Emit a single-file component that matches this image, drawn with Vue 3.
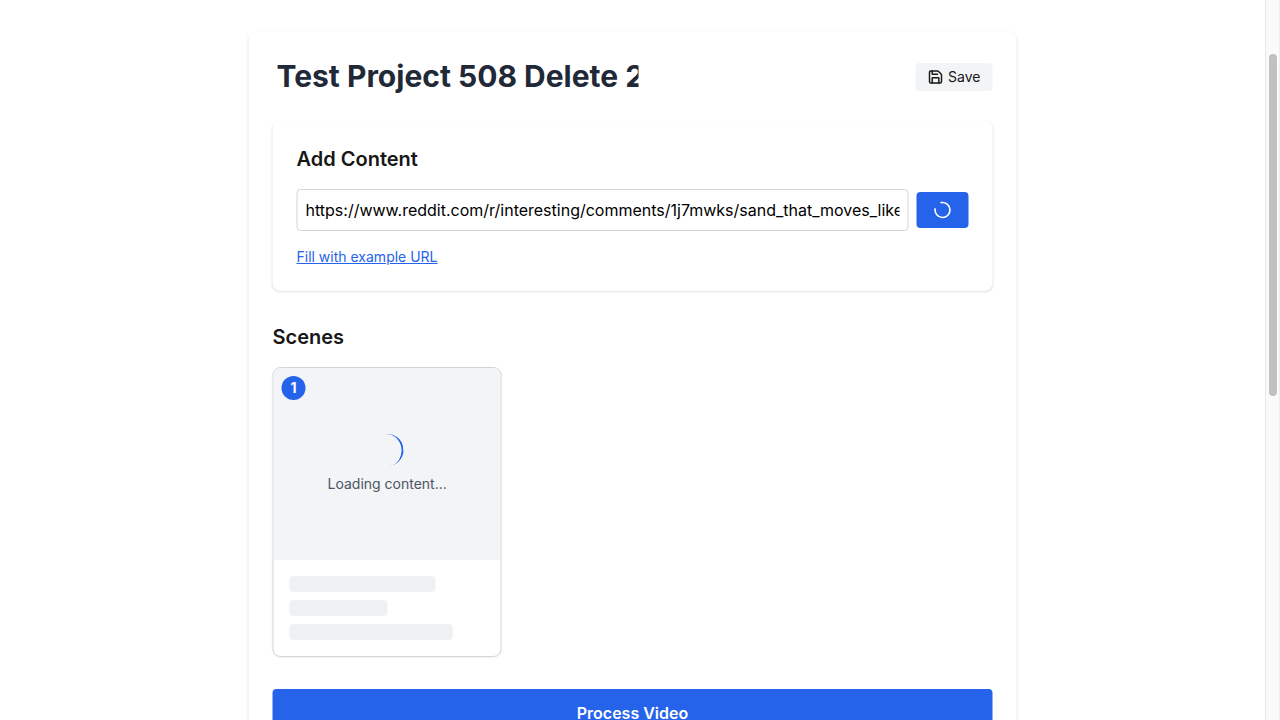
<script setup>
import { ref } from 'vue'

const title = ref('Test Project 508 Delete 2')
const url = ref('https://www.reddit.com/r/interesting/comments/1j7mwks/sand_that_moves_like_water/')
const skeletons = [75, 50, 83.33]
</script>

<template>
  <div class="viewport">
    <main class="page">
      <section class="project">
        <header class="head">
          <input v-model="title" class="title" />
          <button class="save">
            <svg width="16" height="16" viewBox="0 0 24 24" fill="none" stroke="currentColor" stroke-width="2.2" stroke-linecap="round" stroke-linejoin="round">
              <path d="M15.2 3a2 2 0 0 1 1.4.6l3.8 3.8a2 2 0 0 1 .6 1.4V19a2 2 0 0 1-2 2H5a2 2 0 0 1-2-2V5a2 2 0 0 1 2-2z" />
              <path d="M17 21v-7a1 1 0 0 0-1-1H8a1 1 0 0 0-1 1v7" />
              <path d="M7 3v4a1 1 0 0 0 1 1h7" />
            </svg>
            <span>Save</span>
          </button>
        </header>

        <div class="add">
          <h2>Add Content</h2>
          <div class="row">
            <input v-model="url" class="url" />
            <button class="submit" aria-label="Adding">
              <svg width="20" height="20" viewBox="0 0 24 24" fill="none" stroke="currentColor" stroke-width="2" stroke-linecap="round" stroke-linejoin="round">
                <path d="M21 12a9 9 0 1 1-6.219-8.56" />
              </svg>
            </button>
          </div>
          <button class="example">Fill with example URL</button>
        </div>

        <h2 class="scenes-title">Scenes</h2>
        <div class="scenes">
          <article class="scene">
            <div class="preview">
              <span class="number">1</span>
              <div class="ring"></div>
              <p>Loading content...</p>
            </div>
            <div class="lines">
              <div v-for="w in skeletons" :key="w" class="line" :style="{ width: w + '%' }"></div>
            </div>
          </article>
        </div>

        <button class="process">Process Video</button>
      </section>
    </main>
    <div class="track"><div class="thumb"></div></div>
  </div>
</template>

<style>
body { margin: 0; overflow: hidden; }
</style>

<style scoped>
* { box-sizing: border-box; }
.viewport {
  display: flex;
  height: 720px;
  overflow: hidden;
  background: #fff;
  color: #171717;
  font-family: Inter, "Liberation Sans", sans-serif;
  font-size: 16px;
  line-height: 24px;
}
button, input { font: inherit; color: inherit; border: 0; margin: 0; outline: 0; }
h2, p { margin: 0; }
.page { flex: 1; min-width: 0; padding-top: 32px; padding-left: 1px; }
.project {
  width: 768px;
  height: 900px;
  margin: 0 auto;
  padding: 24px;
  border-radius: 8px;
  box-shadow: 0 1px 3px rgba(0, 0, 0, 0.1), 0 1px 2px -1px rgba(0, 0, 0, 0.1);
  transform: translateX(-0.5px);
}
.head { display: flex; align-items: center; justify-content: space-between; height: 41px; margin-bottom: 24px; }
.title {
  width: 370px;
  height: 40px;
  margin-top: -2px;
  padding: 0 4px 0 3.5px;
  background: transparent;
  color: #1f2937;
  font-size: 30px;
  font-weight: 700;
  line-height: 36px;
}
.save {
  display: flex;
  align-items: center;
  gap: 4.5px;
  height: 28px;
  padding: 0 12px;
  border-radius: 4px;
  background: #f3f4f6;
  font-size: 14px;
  line-height: 20px;
}
.add {
  height: 170px;
  padding: 24px;
  border-radius: 8px;
  box-shadow: 0 1px 3px rgba(0, 0, 0, 0.1), 0 1px 2px -1px rgba(0, 0, 0, 0.1);
}
h2 { font-size: 20px; line-height: 28px; font-weight: 600; }
.add h2 { margin-bottom: 16px; }
.row { display: flex; align-items: center; gap: 8px; }
.url {
  flex: 1;
  min-width: 0;
  height: 42px;
  padding: 8px 8px 8px 7.5px;
  border: 1px solid #d1d5db;
  border-radius: 4px;
  background: #fff;
  color: #000;
}
.submit {
  display: flex;
  align-items: center;
  justify-content: center;
  width: 52px;
  height: 36px;
  padding: 0;
  border-radius: 4px;
  background: #2563eb;
  color: #fff;
}
.submit svg { transform: rotate(-100deg); }
.example {
  display: block;
  margin-top: 16px;
  padding: 0;
  background: none;
  color: #2563eb;
  font-size: 14px;
  line-height: 20px;
  text-decoration: underline;
}
.scenes-title { margin: 32px 0 16px; }
.scenes { display: grid; grid-template-columns: repeat(3, 1fr); gap: 16px; }
.scene {
  height: 290px;
  overflow: hidden;
  border: 1px solid #d1d5db;
  border-radius: 8px;
  box-shadow: 0 1px 2px rgba(0, 0, 0, 0.05);
}
.preview {
  position: relative;
  display: flex;
  flex-direction: column;
  align-items: center;
  justify-content: center;
  height: 192px;
  background: #f3f4f6;
}
.number {
  position: absolute;
  top: 8px;
  left: 8px;
  width: 24px;
  height: 24px;
  border-radius: 50%;
  background: #2563eb;
  color: #fff;
  font-size: 14px;
  font-weight: 700;
  text-align: center;
}
.ring {
  width: 32px;
  height: 32px;
  margin-bottom: 8px;
  border-bottom: 2px solid #2563eb;
  border-radius: 50%;
  transform: rotate(-99deg);
}
.preview p { color: #4b5563; font-size: 14px; line-height: 20px; }
.lines { display: grid; gap: 8px; padding: 16px; }
.line { height: 16px; border-radius: 4px; background: #eff0f2; }
.process {
  display: block;
  width: 100%;
  height: 48px;
  margin-top: 32px;
  padding: 0;
  border-radius: 4px;
  background: #2563eb;
  color: #fff;
  font-weight: 600;
}
.track { width: 15px; padding: 54px 3px 0; border-left: 1px solid #e8e8e8; border-right: 1px solid #ededed; background: #fafafa; }
.thumb { width: 8px; height: 342px; border-radius: 4px; background: #c1c1c1; }
</style>
